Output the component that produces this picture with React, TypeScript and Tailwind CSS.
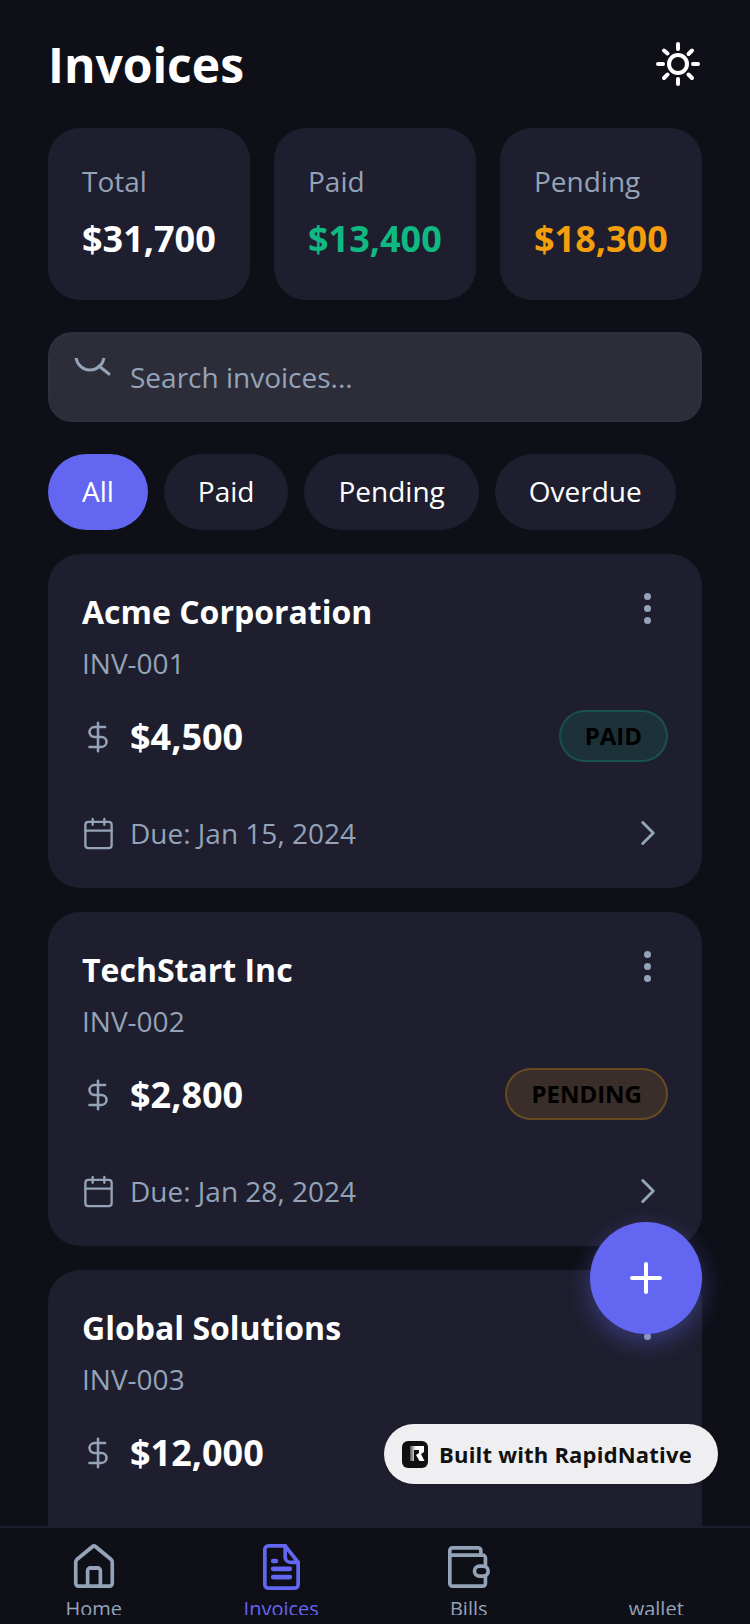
import { Calendar, ChevronRight, Plus } from "lucide-react";

const font = { fontFamily: '"Open Sans", sans-serif' };

const invoices = [
  { name: "Acme Corporation", id: "INV-001", amount: "$4,500", status: "PAID", due: "Due: Jan 15, 2024" },
  { name: "TechStart Inc", id: "INV-002", amount: "$2,800", status: "PENDING", due: "Due: Jan 28, 2024" },
  { name: "Global Solutions", id: "INV-003", amount: "$12,000", status: "", due: "Due: Feb 5, 2024" },
];

function SunIcon() {
  return (
    <svg width="48" height="48" viewBox="0 0 48 48" fill="none" stroke="white" strokeWidth="4" strokeLinecap="round" className="mt-[-2px]">
      <circle cx="24" cy="24" r="9" />
      <path d="M24 4v5M24 39v5M4 24h5M39 24h5M10 10.500l3.500 3M34.500 14l3.500-3.500M10 38l3.500-3.500M34.500 34.500L38 38" />
    </svg>
  );
}

// the search glyph is cut off at the top in the original, only the lower arc shows
function ClippedSearch() {
  return (
    <svg width="40" height="20" viewBox="0 0 40 20" fill="none" stroke="#94a3b8" strokeWidth="3" strokeLinecap="round" className="mt-[24px] ml-[23px] shrink-0 self-start">
      <circle cx="17" cy="-2" r="14" />
      <path d="M26 8l10 8" />
    </svg>
  );
}

function DollarIcon() {
  return (
    <svg width="34" height="34" viewBox="0 0 24 24" preserveAspectRatio="none" fill="none" stroke="#94a3b8" strokeWidth="1.800" strokeLinecap="round" strokeLinejoin="round" className="ml-[-1px]">
      <path d="M12 2v20M17 5H9.500a3.500 3.500 0 0 0 0 7h5a3.500 3.500 0 0 1 0 7H6" />
    </svg>
  );
}

function HomeIcon() {
  return (
    <svg width="42" height="46" viewBox="0 0 46 48" preserveAspectRatio="none" fill="none" stroke="#94a3b8" strokeWidth="4" strokeLinejoin="round" strokeLinecap="round">
      <path d="M6 44h34a3 3 0 0 0 3-3V19c0-1-.4-2-1.200-2.800L25 3a3 3 0 0 0-4 0L4.200 16.200C3.400 17 3 18 3 19v22a3 3 0 0 0 3 3z" />
      <path d="M16 44V28a3 3 0 0 1 3-3h8a3 3 0 0 1 3 3v16" />
    </svg>
  );
}

function FileIcon() {
  return (
    <svg width="37" height="46" viewBox="0 0 40 50" preserveAspectRatio="none" fill="none" stroke="#6366f1" strokeWidth="4" strokeLinejoin="round" strokeLinecap="round">
      <path d="M6 2h18l14 18v24a4 4 0 0 1-4 4H6a4 4 0 0 1-4-4V6a4 4 0 0 1 4-4z" />
      <path d="M24 2v12a6 6 0 0 0 6 6h8" />
      <path d="M11 18.500h3M11 27h18M11 36h18" strokeWidth="5" />
    </svg>
  );
}

function WalletIcon() {
  return (
    <svg width="42" height="42" viewBox="0 0 46 46" preserveAspectRatio="none" fill="none" stroke="#94a3b8" strokeWidth="4" strokeLinejoin="round" strokeLinecap="round" className="mt-[2px]">
      <path d="M2 10V41a3 3 0 0 0 3 3h33a3 3 0 0 0 3-3V13a3 3 0 0 0-3-3H2zM2 10V5a3 3 0 0 1 3-3h28a3 3 0 0 1 3 3v5" />
      <rect x="29" y="22" width="15" height="11" rx="5.500" fill="#0f0f17" />
    </svg>
  );
}

function InvoiceCard({ invoice }: { invoice: (typeof invoices)[number] }) {
  const paid = invoice.status === "PAID";
  return (
    <div className="shrink-0 rounded-[32px] bg-[#1e1e2e] px-[34px] pt-[34px] pb-[35px]">
      <div className="flex items-start justify-between">
        <div className="flex flex-col pt-[2px]">
          <span className="text-[32px] leading-[44px] font-bold text-white">{invoice.name}</span>
          <span className="mt-[9px] text-[28px] leading-[40px] text-[#94a3b8]">{invoice.id}</span>
        </div>
        <div className="flex flex-col gap-[5px] pt-[5px] pr-[17px]">
          <span className="h-[7px] w-[7px] rounded-full bg-[#94a3b8]" />
          <span className="h-[7px] w-[7px] rounded-full bg-[#94a3b8]" />
          <span className="h-[7px] w-[7px] rounded-full bg-[#94a3b8]" />
        </div>
      </div>
      <div className="mt-[26px] flex h-[56px] items-center justify-between">
        <div className="flex items-center gap-[15px]">
          <DollarIcon />
          <span className="text-[36px] leading-[48px] font-bold text-white">{invoice.amount}</span>
        </div>
        {invoice.status && (
          <span
            className={`mb-[3px] rounded-[26px] border-2 px-[24px] py-[7px] text-[24px] leading-[34px] font-bold text-black ${
              paid ? "border-[#10b98140] bg-[#10b98120]" : "border-[#f59e0b40] bg-[#f59e0b20]"
            }`}
          >
            {invoice.status}
          </span>
        )}
      </div>
      <div className="mt-[48px] flex h-[40px] items-center justify-between">
        <div className="flex items-center gap-[14px]">
          <Calendar size={35} strokeWidth={1.600} className="ml-[-1px] text-[#94a3b8]" />
          <span className="text-[28px] leading-[38px] text-[#94a3b8]">{invoice.due}</span>
        </div>
        <ChevronRight size={42} strokeWidth={1.700} className="mr-[-1px] text-[#94a3b8]" />
      </div>
    </div>
  );
}

export default function App() {
  return (
    <div style={font} className="relative flex h-[1624px] w-[750px] flex-col overflow-hidden bg-[#0f0f17]">
      <div className="flex min-h-0 flex-1 flex-col overflow-hidden px-[48px]">
        <div className="flex h-[128px] shrink-0 items-center justify-between pt-[1px]">
          <h1 className="text-[48px] leading-[64px] font-bold text-white">Invoices</h1>
          <SunIcon />
        </div>

        <div className="flex shrink-0 gap-[24px]">
          {[
            { label: "Total", value: "$31,700", color: "text-white" },
            { label: "Paid", value: "$13,400", color: "text-[#10b981]" },
            { label: "Pending", value: "$18,300", color: "text-[#f59e0b]" },
          ].map((s) => (
            <div key={s.label} className="flex h-[172px] flex-1 flex-col rounded-[32px] bg-[#1e1e2e] px-[34px] pt-[34px]">
              <span className="text-[28px] leading-[38px] text-[#94a3b8]">{s.label}</span>
              <span className={`mt-[14px] text-[36px] leading-[50px] font-bold ${s.color}`}>{s.value}</span>
            </div>
          ))}
        </div>

        <div className="mt-[32px] flex h-[90px] shrink-0 overflow-hidden rounded-[24px] border-2 border-[#30303d] bg-[#2d2d3a]">
          <ClippedSearch />
          <span className="ml-[17px] self-center text-[28px] leading-[38px] text-[#94a3b8]">Search invoices...</span>
        </div>

        <div className="mt-[32px] flex shrink-0 gap-[16px]">
          {["All", "Paid", "Pending", "Overdue"].map((c, i) => (
            <span
              key={c}
              className={`flex h-[76px] items-center rounded-full px-[34px] pb-[2px] text-[28px] text-white ${i === 0 ? "bg-[#6366f1]" : "bg-[#1e1e2e]"}`}
            >
              {c}
            </span>
          ))}
        </div>

        <div className="mt-[24px] flex flex-col gap-[24px]">
          {invoices.map((inv) => (
            <InvoiceCard key={inv.id} invoice={inv} />
          ))}
        </div>
      </div>

      <nav className="grid h-[98px] shrink-0 grid-cols-4 overflow-hidden border-t-2 border-[#1e1e2e] bg-[#0f0f17]">
        {[
          { label: "Home", icon: <HomeIcon />, color: "text-[#94a3b8]" },
          { label: "Invoices", icon: <FileIcon />, color: "text-[#6366f1]" },
          { label: "Bills", icon: <WalletIcon />, color: "text-[#94a3b8]" },
          { label: "wallet", icon: null, color: "text-[#94a3b8]" },
        ].map((n) => (
          <div key={n.label} className="relative flex h-[87px] flex-col items-center overflow-hidden pt-[16px]">
            <div className="h-[48px]">{n.icon}</div>
            <span className={`absolute top-[67px] text-[20px] leading-[28px] ${n.color}`}>{n.label}</span>
          </div>
        ))}
      </nav>

      <button className="absolute top-[1222px] left-[590px] flex h-[112px] w-[112px] items-center justify-center rounded-full bg-[#6366f1] shadow-[0_8px_24px_rgba(99,102,241,0.4)]">
        <Plus size={48} strokeWidth={2} className="text-white" />
      </button>

      <div className="absolute top-[1424px] left-[384px] flex h-[60px] w-[334px] items-center gap-[11px] rounded-full bg-[#efeef0] pl-[18px] shadow-sm">
        <span className="flex h-[27px] w-[26px] items-center justify-center rounded-[6px] bg-[#111]">
          <svg width="26" height="27" viewBox="0 0 26 27">
            <defs>
              <linearGradient id="rn" x1="0" y1="0" x2="1" y2="0">
                <stop offset="0" stopColor="#555" />
                <stop offset="0.4" stopColor="white" />
              </linearGradient>
            </defs>
            <path d="M8 5h14v6l-3 2 3.500 7h-5L14 14l3-2V9H12v11H8z" fill="url(#rn)" />
          </svg>
        </span>
        <span className="text-[22px] font-bold tracking-[0.2px] text-[#111]">Built with RapidNative</span>
      </div>
    </div>
  );
}
